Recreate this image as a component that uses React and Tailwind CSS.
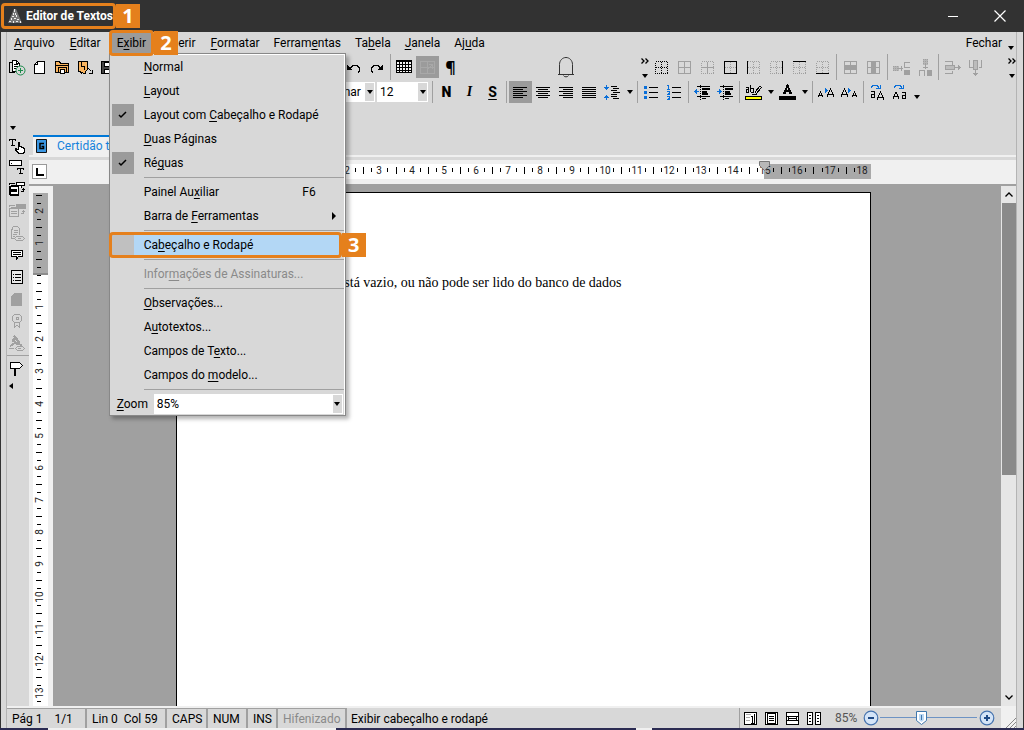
import { useState } from 'react'

const BLUE = '#0a6fd8'
const DIM = '#a0a0a0'

/* ---------- drawing helpers ---------- */

function Px({ w = 17, h = 17, children }) {
  return (
    <svg
      width={w}
      height={h}
      viewBox={`0 0 ${w} ${h}`}
      fill="none"
      stroke="#000"
      shapeRendering="crispEdges"
      className="block shrink-0"
      aria-hidden="true"
    >
      {children}
    </svg>
  )
}

const Caret = () => (
  <svg width="6" height="4" viewBox="0 0 6 4" className="block shrink-0" aria-hidden="true">
    <path d="M0 0h6L3 4z" fill="#000" />
  </svg>
)

const Chevrons = () => (
  <svg width="8" height="6" viewBox="0 0 8 6" fill="none" stroke="#000" strokeWidth="1.3" className="block shrink-0" aria-hidden="true">
    <path d="M.5.5 3 3 .5 5.500M4.500.5 7 3 4.500 5.500" />
  </svg>
)

/* ---------- toolbar icons ---------- */

const NewFromModel = () => (
  <svg width="18" height="17" viewBox="0 0 18 17" fill="none" stroke="#000" className="block shrink-0" aria-hidden="true">
    <g shapeRendering="crispEdges">
      <path d="M4.500 1.500h4l3 3v8h-7z" fill="#fff" />
      <path d="M6 5.500h4M6 7.500h4M6 9.500h2" />
      <path d="M4 3.500H1.500v10H7" />
      <path d="M8.500 1.500v3h3" />
    </g>
    <circle cx="12.500" cy="11.500" r="4.500" fill="#d8d8d8" stroke="#1a8a4a" />
    <path d="M10 11.500h5M12.500 9v5" stroke="#1a8a4a" />
  </svg>
)

const NewDoc = () => (
  <Px>
    <path d="M6.500 2.500h7v12h-10v-9z" fill="#fff" />
    <path d="M3.500 5.500h3v-3" />
  </Px>
)

const OpenFolder = () => (
  <Px>
    <path d="M1.500 13.500v-11h4l1 2h8v9z" fill="#f9b45f" />
    <path d="M1 6.500h14" />
    <path d="M4.500 14V8.500h8V14" />
    <path d="M6.500 14v-3.500h4V14z" fill="#fff" />
  </Px>
)

const ImportDoc = () => (
  <Px>
    <path d="M1.500 2.500h9v8l-2 2v2h-2l-1-1-1 1-1-2h-2z" fill="#f9b45f" />
    <path d="M4.500 3v4.500h3v3M10.500 8.500l4 4M15.500 11v3.500H12" />
  </Px>
)

const Save = () => (
  <Px>
    <path d="M1.500 2.500h13v12h-13z" fill="#444" />
    <path d="M4.500 3h7v4h-7zM4.500 10h7v4h-7z" fill="#fff" />
  </Px>
)

const Undo = () => (
  <Px>
    <path d="M4 9.500h1v-1h1v-1h1v-1h5v1h1v1h1v4h-1v1" />
    <path d="M2 6v5h5v-1H6V9H5V8H4V7H3V6z" fill="#000" stroke="none" />
  </Px>
)

const Redo = () => (
  <Px>
    <path d="M13 9.500h-1v-1h-1v-1h-1v-1H5v1H4v1H3v4h1v1" />
    <path d="M15 6v5h-5v-1h1V9h1V8h1V7h1V6z" fill="#000" stroke="none" />
  </Px>
)

const TableIcon = () => (
  <Px>
    <path d="M.5 1.500h15v12H.5z" fill="#f4f4f4" />
    <path d="M1 2.500h14M3.500 2v12M6.500 2v12M9.500 2v12M12.500 2v12M1 5.500h14M1 8.500h14M1 11.500h14" />
  </Px>
)

const TableTool = () => (
  <Px>
    <g stroke="#a8a8a8">
      <path d="M1.500 2.500h14v12h-14zM1.500 8.500h14M8.500 2.500v12M8 11l5-5M13.500 9.500v-4h-4" />
    </g>
  </Px>
)

const Bell = () => (
  <svg width="18" height="22" viewBox="0 0 18 22" fill="none" stroke="#333" className="block shrink-0" aria-hidden="true">
    <path d="M2.500 18V8.500C2.500 4.500 5.500 1.500 9 1.500s6.500 3 6.500 7V18M1 18.500h16" />
    <path d="M6.500 19.500c.5 1.800 4.500 1.800 5 0" />
  </svg>
)

const AlignIcon = ({ rows }) => (
  <Px>
    {rows.map(([from, to], i) => (
      <path key={i} d={`M${from} ${i * 2 + 3.5}H${to}`} />
    ))}
  </Px>
)

const alignLeft = [[1, 15], [1, 11], [1, 15], [1, 11], [1, 15], [1, 11]]
const alignCenter = [[1, 15], [3, 13], [1, 15], [3, 13], [1, 15], [3, 13]]
const alignRight = [[1, 15], [5, 15], [1, 15], [5, 15], [1, 15], [5, 15]]
const alignFull = [[1, 15], [1, 15], [1, 15], [1, 15], [1, 15], [1, 15]]

const LineSpacing = () => (
  <Px>
    <path d="M2.500 1v5M0 3.500h5M1 4.500h3M2.500 16v-5M0 13.500h5M1 12.500h3" stroke={BLUE} />
    <path d="M7 2.500h6M9 4.500h6M7 6.500h6M9 8.500h7M7 10.500h6M7 12.500h6M9 14.500h6" />
  </Px>
)

const Bullets = () => (
  <Px>
    <path d="M1 2h3v3H1zM1 7h3v3H1zM1 12h3v3H1z" fill={BLUE} stroke="none" />
    <path d="M6 3.500h9M6 8.500h9M6 13.500h9" />
  </Px>
)

const Numbers = () => (
  <Px>
    <path d="M1 1.500h1.500V5M1 5.500h3M1 7.500h2.500v1.500H2M1 10.500h3M1 12.500h2.500v3H1M2 14.500h1" stroke={BLUE} />
    <path d="M6 3.500h9M6 8.500h9M6 13.500h9" />
  </Px>
)

const Indent = ({ back }) => (
  <Px>
    <path d={back ? 'M0 7.500h5M1.500 6v3M2.500 5v5' : 'M0 7.500h5M3.500 6v3M2.500 5v5'} stroke={BLUE} />
    <path d="M3 2.500h13M3 12.500h13M8 14.500h4" />
    <path d="M8 5h8M8 7.500h5M8 9.500h6" strokeWidth="2" />
    <path d="M6.500 1v15" strokeDasharray="1 1" />
  </Px>
)

const Highlight = () => (
  <Px>
    <path d="M1 3.500h2.500V8H1.500V5.500H3M5.500 1v7M6 4.500h2.500V8H6" />
    <path d="M10 8l5-6 1.500 1.500-5 6zM7 10h5" />
    <path d="M.5 12.500h16v3H.5z" fill="#ff0" />
  </Px>
)

const FontColor = () => (
  <Px>
    <path d="M5 9.500 8.500 1.500 12 9.500M6 7h5" strokeWidth="2" />
    <path d="M4 9.500h3M10 9.500h3" />
    <path d="M.5 12.500h16v3H.5z" fill="#000" />
  </Px>
)

const FontStep = ({ grow }) => (
  <Px>
    <path d={grow ? 'M.5 13v-1L2.500 8l2 4v1M1 11.500h3M9.500 13v-2l3-6 3 6v2M10 10.500h6' : 'M.5 13v-2l3-6 3 6v2M1 10.500h5M11.500 13v-1l2-4 2 4v1M12 11.500h3'} />
    <path d="M7 4v5l3-2.500z" fill={BLUE} stroke="none" />
  </Px>
)

const SwapCase = ({ upper }) => (
  <Px>
    <path d="M2.500 4V2.500h1v-1h5v1h1v2M7 4.500h4.500V1" stroke={BLUE} />
    <path d={upper ? 'M1.500 15v-2l2.500-5 2.500 5v2M2 12.500h5M10 8.500h3.500V14H10v-2.500h3' : 'M2 7.500h3.500V13H2v-2.500h3M8.500 16v-2l3-6 3 6v2M9 13.500h6'} />
  </Px>
)

// sides: any of l, r, t, b drawn black over the dotted grid
const BorderIcon = ({ sides = '', tone = DIM, outer = 'dot', inner = 'dot' }) => (
  <Px>
    <path d="M2.500 2.500h12v12h-12z" stroke={tone} strokeDasharray={outer === 'dot' ? '1 1' : undefined} />
    <path d="M8.500 3v12M3 8.500h12" stroke={tone} strokeDasharray={inner === 'dot' ? '1 1' : undefined} />
    {sides.includes('l') && <path d="M2.500 2v13" />}
    {sides.includes('r') && <path d="M14.500 2v13" />}
    {sides.includes('t') && <path d="M2 2.500h13" />}
    {sides.includes('b') && <path d="M2 14.500h13" />}
  </Px>
)

const MergeRows = () => (
  <Px>
    <g stroke={DIM}>
      <path d="M2.500 2.500h12v12h-12zM8.500 2.500v12" />
      <path d="M2 6h13v5H2z" fill={DIM} stroke="none" />
    </g>
  </Px>
)

const MergeCols = () => (
  <Px>
    <g stroke={DIM}>
      <path d="M2.500 2.500h12v12h-12zM2.500 8.500h12" />
      <path d="M6 3h5v11H6z" fill={DIM} stroke="none" />
    </g>
  </Px>
)

const InsertCell = ({ vertical }) => (
  <Px>
    <g stroke={DIM} transform={vertical ? 'matrix(0 1 1 0 0 0)' : undefined}>
      <path d="M0 7h6v5H0z" fill={DIM} fillOpacity="0.6" stroke="none" />
      <path d="M0 7.500h6M0 9.500h6M0 11.500h6" strokeDasharray="1 1" />
      <path d="M11 11h6v5h-6z" fill={DIM} stroke="none" />
      <path d="M5 9.500h5M8.500 7v5M17 3.500h-5.500v5H17" />
    </g>
  </Px>
)

const SplitCell = ({ vertical }) => (
  <Px>
    <g stroke={DIM} transform={vertical ? 'matrix(0 1 1 0 0 0)' : undefined}>
      <path d="M1 6h10v5H1z" fill={DIM} fillOpacity="0.5" stroke="none" />
      <path d="M1 2.500h7.500v3M1 14.500h7.500v-3M1 6.500h9v4H1zM10 8.500h7M14.500 6v5M15.500 7v3" />
    </g>
  </Px>
)

/* ---------- side bar icons ---------- */

const sideIcons = [
  ['Texto rápido', (
    <>
      <path d="M0 2.500h7M3.500 2v7M2 8.500h4M.5 2v2M6.500 2v2" />
      <path d="M9.500 12V5.500h1V9h2v1h2v1h1v4h-1v1h-5v-1h-1v-1h-1v-1h-1v-2h1v1z" fill="#fff" />
    </>
  )],
  ['Campo', (
    <>
      <path d="M.5 1.500h12v5H.5z" fill="#fff" />
      <path d="M2 4.500h1M8 9.500h7M11.500 9v6M10 14.500h4M8.500 9v2M14.500 9v2" />
    </>
  )],
  ['Modelo', (
    <>
      <path d="M7.500 1.500h8v3h-8z" fill="#fff" />
      <path d="M.5 5.500h9v8h-9zM.5 4V2.500H6M2 4.500h10.500V7" fill="#fff" />
      <path d="M2 8.500h6M2 9.500h6M2 10.500h6M14.500 7v3.500H12M13 8.500h3" />
      <path d="M1 6v8h9" />
    </>
  )],
  ['Modelo inativo', (
    <g stroke={DIM}>
      <path d="M.5 5.500h9v8h-9zM2 4.500h9M2 8.500h6M2 10.500h6M14.500 7v3.500H12M13 8.500h3M.5 4V2.500H6" />
      <path d="M7 1.500h9v4H7z" fill={DIM} />
    </g>
  )],
  ['Visualizar', (
    <g stroke={DIM}>
      <path d="M3.500 1.500h5l2 2v6M3.500 1.500v3h-1v9h3M5 5.500h4M5 7.500h4M4 9.500h4M4 11.500h2" />
      <path d="M5.500 13.500l2-2h6l2 2-2 2h-6zM9 13.500h3" />
    </g>
  )],
  ['Comentário', (
    <>
      <path d="M2.500 3.500h11v6h-4l-2 3v-3h-5z" fill="#fff" />
      <path d="M4 5.500h8M4 7.500h8" />
    </>
  )],
  ['Lista', (
    <>
      <path d="M2.500 1.500h11v13h-11z" fill="#e8e8e8" />
      <path d="M4 5.500h1M6 5.500h6M4 8.500h1M6 8.500h6M4 11.500h1M6 11.500h6" />
    </>
  )],
  ['Documento', <path key="d" d="M5 2h8v13H2V5z" fill={DIM} stroke="none" />],
  ['Certificado', (
    <g stroke={DIM}>
      <path d="M5.500 1.500h5l2 2v4l-2 2h-5l-2-2v-4zM7.500 4.500h2v2h-2zM5.500 10v4l2.500-1.500 2.500 1.500v-4" />
    </g>
  )],
  ['Assinatura', (
    <g stroke={DIM}>
      <path d="M5 1l4 4M3 5l5 4M6 3l4 4-2 2-4-4zM9 8l4 3M1 11l5-3" strokeWidth="2" />
      <path d="M0 13.500h5M6.500 13.500l2-2h5l2 2-2 2h-5z" />
      <path d="M9 13.500h3" />
    </g>
  )],
]

/* ---------- small building blocks ---------- */

function Tool({ label, pressed, children }) {
  return (
    <button
      type="button"
      aria-label={label}
      className={
        pressed
          ? '-mx-0.5 flex h-[22px] w-[23px] shrink-0 items-center justify-center bg-[#9b9b9b]'
          : 'flex h-[22px] w-[19px] shrink-0 items-center justify-center'
      }
    >
      {children}
    </button>
  )
}

const DropArrow = ({ label }) => (
  <button type="button" aria-label={label} className="flex h-[22px] w-[7px] shrink-0 items-center justify-center">
    <Caret />
  </button>
)

const Sep = () => <div className="w-px shrink-0 self-stretch bg-[#a0a0a0]" />

// one letter of the label is the keyboard mnemonic
function Label({ text, at }) {
  if (at === undefined) return text
  return (
    <>
      {text.slice(0, at)}
      <span className="underline underline-offset-2">{text[at]}</span>
      {text.slice(at + 1)}
    </>
  )
}

function Combo({ label, options, box, pad }) {
  return (
    <div className={`relative flex h-5 border border-white bg-white ${box}`}>
      <select aria-label={label} className={`w-full appearance-none bg-white pr-3 text-xs leading-4 outline-none ${pad}`}>
        {options.map(o => <option key={o}>{o}</option>)}
      </select>
      <span className="pointer-events-none absolute inset-y-0 right-0 flex w-[9px] items-center justify-center bg-[#d8d8d8]">
        <Caret />
      </span>
    </div>
  )
}

const Badge = ({ n }) => (
  <span className="flex h-6 w-6 shrink-0 items-center justify-center bg-[#e5801c] font-['Open_Sans',sans-serif] text-xl leading-6 font-bold text-white">
    {n}
  </span>
)

/* ---------- rulers ---------- */

const CM = 32.15

function marks(zero, end) {
  const list = []
  for (let q = Math.ceil((-zero / CM) * 4); zero + (q * CM) / 4 < end - 2; q++) {
    list.push({ q, pos: Math.round(zero + (q * CM) / 4) })
  }
  return list
}

function HorizontalRuler() {
  return (
    <svg width="694" height="19" viewBox="0 0 694 19" className="block" aria-hidden="true">
      <rect x="0" y="4" width="694" height="15" fill="#a9a9a9" />
      <rect x="106" y="4" width="481" height="15" fill="#fff" />
      <g shapeRendering="crispEdges">
        {marks(106, 694).map(({ q, pos }) => {
          if (q % 4 === 0) return null
          return q % 2 === 0
            ? <path key={q} d={`M${pos}.5 7v7`} stroke="#000" />
            : <path key={q} d={`M${pos}.5 8v4`} stroke="#000" />
        })}
      </g>
      {marks(106, 694).map(({ q, pos }) =>
        q % 4 === 0 && q !== 0 ? (
          <text key={q} x={pos} y="14" textAnchor="middle" fontSize="10" fill="#222">{Math.abs(q / 4)}</text>
        ) : null
      )}
      <path d="M582.500 1.500h10v4l-5 5-5-5z" fill="#b8b8b8" stroke="#777" />
    </svg>
  )
}

function VerticalRuler() {
  return (
    <svg width="15" height="513" viewBox="0 0 15 513" className="block" aria-hidden="true">
      <rect width="15" height="82" fill="#a9a9a9" />
      <rect y="80" width="15" height="2" fill="#8c8c8c" />
      <g shapeRendering="crispEdges">
        {marks(82, 513).map(({ q, pos }) => {
          if (q % 4 === 0 && q !== 0) return null
          return q % 2 === 0 && q !== 0
            ? <path key={q} d={`M3 ${pos}.5h6`} stroke="#000" />
            : <path key={q} d={`M4 ${pos}.5h4`} stroke="#000" />
        })}
      </g>
      {marks(82, 513).map(({ q, pos }) =>
        q % 4 === 0 && q !== 0 ? (
          <text key={q} transform={`translate(10 ${pos}) rotate(-90)`} textAnchor="middle" fontSize="10" fill="#222">
            {Math.abs(q / 4)}
          </text>
        ) : null
      )}
    </svg>
  )
}

/* ---------- window parts ---------- */

function TitleBar() {
  return (
    <header className="flex h-8 shrink-0 items-center bg-[#323232] text-white">
      <div className="flex items-center pl-px">
        <div className="flex h-[26px] items-center gap-1 rounded-sm border-3 border-[#e5801c] pl-1">
          <svg width="14" height="14" viewBox="0 0 14 14" aria-hidden="true">
            <path d="M6 0h2l6 14H0z" fill="#777" />
            <path d="M6 0h1v3H6zM5 4h1v2H5zM7 4h1v2H7zM4 7h2v1H4zM8 6h1v2H8zM3 9h1v2H3zM6 9h2v1H6zM9 10h2v1H9zM1 12h2v1H1zM5 12h1v2H5zM8 12h2v1H8zM12 12h1v2h-1z" fill="#eee" />
          </svg>
          <h1 className="text-xs font-bold whitespace-nowrap">Editor de Textos</h1>
        </div>
        <Badge n="1" />
      </div>
      <div className="ml-auto flex">
        <button type="button" aria-label="Minimizar" className="flex h-8 w-[46px] items-center justify-center">
          <span className="h-px w-[10px] bg-white" />
        </button>
        <button type="button" aria-label="Fechar janela" className="flex h-8 w-12 items-center justify-center">
          <svg width="12" height="12" viewBox="0 0 12 12" stroke="#fff" strokeWidth="1.2" aria-hidden="true">
            <path d="M.5.5l11 11M11.500.5l-11 11" />
          </svg>
        </button>
      </div>
    </header>
  )
}

const menuBefore = [['Arquivo', 0], ['Editar', 0]]
const menuAfter = [['Formatar', 0], ['Ferramentas', 6], ['Tabela', 2], ['Janela', 0], ['Ajuda', 2]]

const viewMenu = [
  { text: 'Normal', at: 0 },
  { text: 'Layout', at: 0 },
  { text: 'Layout com Cabeçalho e Rodapé', at: 11, checked: true },
  { text: 'Duas Páginas', at: 0 },
  { text: 'Réguas', at: 2, checked: true },
  null,
  { text: 'Painel Auxiliar', at: 9, keys: 'F6' },
  { text: 'Barra de Ferramentas', at: 9, submenu: true },
  null,
  { text: 'Cabeçalho e Rodapé', at: 2, active: true },
  null,
  { text: 'Informações de Assinaturas...', at: 5, disabled: true },
  null,
  { text: 'Observações...', at: 0 },
  { text: 'Autotextos...', at: 1 },
  { text: 'Campos de Texto...', at: 11 },
  { text: 'Campos do modelo...', at: 10 },
  null,
]

function ViewMenu() {
  return (
    <div className="absolute top-[21px] left-0 -z-10 w-[237px] border border-[#888] bg-[#d8d8d8] shadow-[3px_3px_4px_rgba(0,0,0,0.3)]">
      <div className="border-t border-r border-white">
        {viewMenu.map((item, i) => {
          if (!item) {
            return (
              <div key={i} className="flex h-[5px] items-center pl-[34px]">
                <div className="h-px flex-1 bg-[#a0a0a0]" />
              </div>
            )
          }
          return (
            <div key={i} className="relative h-6">
              <button
                type="button"
                disabled={item.disabled}
                className={`flex h-6 w-full items-center text-left whitespace-nowrap ${item.disabled ? 'text-[#8a8a8a]' : 'text-black'}`}
              >
                <span
                  className={`ml-0.5 flex h-[22px] w-[22px] shrink-0 items-center justify-center ${item.checked ? 'bg-[#9b9b9b]' : ''} ${item.active ? 'bg-[#c0c0c0]' : ''}`}
                >
                  {item.checked && (
                    <svg width="9" height="8" viewBox="0 0 9 8" fill="none" stroke="#000" strokeWidth="1.5" aria-hidden="true">
                      <path d="M1 4l2 2 5-5" />
                    </svg>
                  )}
                </span>
                <span className={`flex h-[22px] flex-1 items-center pl-[10px] ${item.active ? 'bg-[#b3d7f5]' : ''}`}>
                  <span><Label text={item.text} at={item.at} /></span>
                  {item.keys && <span className="mr-7 ml-auto">{item.keys}</span>}
                  {item.submenu && (
                    <svg width="4" height="8" viewBox="0 0 4 8" className="mr-2 ml-auto" aria-hidden="true">
                      <path d="M0 0v8l4-4z" fill="#000" />
                    </svg>
                  )}
                </span>
              </button>
              {item.active && (
                <div className="pointer-events-none absolute -inset-y-px -right-[22px] -left-px flex items-center">
                  <div className="h-full flex-1 rounded-sm border-3 border-[#e5801c]" />
                  <Badge n="3" />
                </div>
              )}
            </div>
          )
        })}
        <div className="flex h-[23px] items-center gap-1 pr-px pl-[7px]">
          <span className="w-[33px] shrink-0"><Label text="Zoom" at={0} /></span>
          <Combo label="Zoom" options={['85%', '100%', '150%']} box="flex-1" pad="pl-0.5" />
        </div>
      </div>
    </div>
  )
}

function MenuBar() {
  return (
    <nav className="flex h-[22px] shrink-0 items-center">
      {menuBefore.map(([text, at]) => (
        <button key={text} type="button" className="pr-2 pl-[7px]"><Label text={text} at={at} /></button>
      ))}
      <div className="relative z-20 flex h-[22px] items-center">
        <button type="button" className="flex h-[26px] items-center rounded-sm border-3 border-[#e5801c] bg-[#9b9b9b] px-[5px]">
          <Label text="Exibir" at={1} />
        </button>
        <Badge n="2" />
        <ViewMenu />
      </div>
      <button type="button" className="-ml-4 pr-2"><Label text="Inserir" at={0} /></button>
      {menuAfter.map(([text, at]) => (
        <button key={text} type="button" className="px-[7px]"><Label text={text} at={at} /></button>
      ))}
      <button type="button" className="ml-auto pr-1.5">Fechar</button>
      <span className="flex w-2 self-end pb-1"><Caret /></span>
    </nav>
  )
}

function Toolbars() {
  return (
    <div className="flex h-[68px] shrink-0 flex-col overflow-hidden">
      <div className="flex h-[26px] items-center gap-1">
        <Tool label="Novo a partir de modelo"><NewFromModel /></Tool>
        <Tool label="Novo"><NewDoc /></Tool>
        <Tool label="Abrir"><OpenFolder /></Tool>
        <Tool label="Importar"><ImportDoc /></Tool>
        <Tool label="Salvar"><Save /></Tool>
        <div className="w-[218px] shrink-0" />
        <Tool label="Desfazer"><Undo /></Tool>
        <Tool label="Refazer"><Redo /></Tool>
        <Sep />
        <Tool label="Inserir tabela"><TableIcon /></Tool>
        <Tool label="Ferramenta de tabela" pressed><TableTool /></Tool>
        <Tool label="Marcas de parágrafo"><span className="font-['Open_Sans',sans-serif] text-base leading-4 font-bold">¶</span></Tool>
        <div className="w-[88px] shrink-0" />
        <Tool label="Notificações"><Bell /></Tool>
        <div className="w-[58px] shrink-0" />
        <div className="flex w-[7px] shrink-0 flex-col items-center justify-between self-stretch pt-1 pb-0.5">
          <Chevrons />
          <Caret />
        </div>
        <Tool label="Sem bordas"><BorderIcon tone="#000" /></Tool>
        <Tool label="Todas as bordas"><BorderIcon outer="line" inner="line" /></Tool>
        <Tool label="Bordas internas"><BorderIcon inner="line" /></Tool>
        <Tool label="Contorno"><BorderIcon sides="lrtb" /></Tool>
        <Tool label="Borda esquerda"><BorderIcon sides="l" /></Tool>
        <Tool label="Borda direita"><BorderIcon sides="r" /></Tool>
        <Tool label="Borda superior"><BorderIcon sides="t" /></Tool>
        <Tool label="Borda inferior"><BorderIcon sides="b" /></Tool>
        <Sep />
        <Tool label="Mesclar linhas"><MergeRows /></Tool>
        <Tool label="Mesclar colunas"><MergeCols /></Tool>
        <Sep />
        <Tool label="Inserir linha"><InsertCell /></Tool>
        <Tool label="Inserir coluna"><InsertCell vertical /></Tool>
        <Sep />
        <Tool label="Excluir linha"><SplitCell /></Tool>
        <Tool label="Excluir coluna"><SplitCell vertical /></Tool>
        <div className="ml-auto flex w-2 shrink-0 flex-col items-center justify-between self-stretch pt-1 pb-0.5">
          <Chevrons />
          <Caret />
        </div>
      </div>

      <div className="flex h-6 items-center gap-1 py-px">
        <div className="flex gap-0.5 pl-[238px]">
          <Combo label="Estilo" options={['Texto Preliminar']} box="w-[130px]" pad="pl-7" />
          <Combo label="Tamanho da fonte" options={['12', '14', '16']} box="w-[51px]" pad="pl-0.5" />
        </div>
        <Sep />
        <Tool label="Negrito"><span className="text-sm leading-5 font-black">N</span></Tool>
        <Tool label="Itálico"><span className="font-['Liberation_Serif',serif] text-sm leading-5 font-bold italic">I</span></Tool>
        <Tool label="Sublinhado"><span className="text-sm leading-5 font-bold underline underline-offset-2">S</span></Tool>
        <Sep />
        <Tool label="Alinhar à esquerda" pressed><AlignIcon rows={alignLeft} /></Tool>
        <Tool label="Centralizar"><AlignIcon rows={alignCenter} /></Tool>
        <Tool label="Alinhar à direita"><AlignIcon rows={alignRight} /></Tool>
        <Tool label="Justificar"><AlignIcon rows={alignFull} /></Tool>
        <Tool label="Espaçamento"><LineSpacing /></Tool>
        <DropArrow label="Opções de espaçamento" />
        <Sep />
        <Tool label="Marcadores"><Bullets /></Tool>
        <Tool label="Numeração"><Numbers /></Tool>
        <Sep />
        <Tool label="Diminuir recuo"><Indent back /></Tool>
        <Tool label="Aumentar recuo"><Indent /></Tool>
        <Sep />
        <Tool label="Realce"><Highlight /></Tool>
        <DropArrow label="Cor do realce" />
        <Tool label="Cor da fonte"><FontColor /></Tool>
        <DropArrow label="Escolher cor da fonte" />
        <Sep />
        <Tool label="Aumentar fonte"><FontStep grow /></Tool>
        <Tool label="Diminuir fonte"><FontStep /></Tool>
        <Sep />
        <Tool label="Maiúsculas"><SwapCase /></Tool>
        <Tool label="Minúsculas"><SwapCase upper /></Tool>
        <span className="flex self-end pb-1"><Caret /></span>
      </div>
    </div>
  )
}

function SideBar() {
  return (
    <aside className="flex w-[22px] shrink-0 flex-col overflow-hidden">
      <div className="flex h-3 shrink-0 items-center pl-[3px]"><Caret /></div>
      {sideIcons.map(([label, art]) => (
        <button key={label} type="button" aria-label={label} className="flex h-[22px] shrink-0 items-center pl-0.5">
          <Px>{art}</Px>
        </button>
      ))}
      <div className="my-px h-px shrink-0 bg-[#a0a0a0]" />
      <button type="button" aria-label="Marcador" className="flex h-[22px] shrink-0 items-center pl-0.5">
        <Px>
          <path d="M1.500 2.500h9l3 3-3 3h-9z" fill="#fff" />
          <path d="M6 9v7" strokeWidth="2" />
        </Px>
      </button>
      <svg width="4" height="6" viewBox="0 0 4 6" className="mt-1 ml-0.5 shrink-0" aria-hidden="true">
        <path d="M4 0v6L0 3z" fill="#000" />
      </svg>
    </aside>
  )
}

function ScrollBar() {
  return (
    <div className="mt-0.5 flex w-[15px] shrink-0 flex-col bg-[#e6e6e6]">
      <button type="button" aria-label="Rolar para cima" className="flex h-[17px] shrink-0 items-center justify-center">
        <svg width="8" height="5" viewBox="0 0 8 5" fill="none" stroke="#000" strokeWidth="1.3" aria-hidden="true">
          <path d="M.5 4.500 4 1l3.500 3.500" />
        </svg>
      </button>
      <div className="flex min-h-0 flex-1 flex-col pl-px">
        <div className="h-[56%] bg-[#8a8a8a]" />
      </div>
      <button type="button" aria-label="Rolar para baixo" className="flex h-[17px] shrink-0 items-center justify-center">
        <svg width="8" height="5" viewBox="0 0 8 5" fill="none" stroke="#000" strokeWidth="1.3" aria-hidden="true">
          <path d="M.5.5 4 4 7.500.5" />
        </svg>
      </button>
    </div>
  )
}

function Workspace() {
  return (
    <div className="flex min-w-0 flex-1 flex-col">
      {/* document tabs */}
      <div className="flex h-[35px] shrink-0 items-end border-b-2 border-[#f0f0f0] pl-1">
        <a href="#certidao" className="flex h-5 w-[160px] items-center gap-[10px] border-t-2 border-[#0078d7] bg-[#f0f0f0] pl-[3px] text-[#1583dc]">
          <svg width="11" height="14" viewBox="0 0 11 14" aria-hidden="true">
            <path d="M.5.5h10v13H.5z" fill="#3b97e3" stroke="#111" />
            <path d="M8 4.500H4v5h3.500V7.500H5.500" fill="none" stroke="#000" strokeWidth="1.500" />
          </svg>
          Certidão teste
        </a>
      </div>

      {/* horizontal ruler */}
      <div className="mt-[3px] flex h-6 shrink-0 bg-[#f0f0f0] pl-[3px]">
        <button type="button" aria-label="Tabulação" className="mt-1 flex h-[15px] w-[15px] items-center justify-center border border-[#999] bg-white">
          <span className="h-2 w-2 border-b-2 border-l-2 border-black" />
        </button>
        <div className="ml-[130px]"><HorizontalRuler /></div>
      </div>

      <div className="flex min-h-0 flex-1 bg-[#a0a0a0]">
        <div className="mt-0.5 flex w-6 shrink-0 flex-col overflow-hidden bg-[#f0f0f0] pt-[7px] pr-[5px] pl-1">
          <div className="flex-1 bg-white"><VerticalRuler /></div>
        </div>
        <main className="flex min-w-0 flex-1 overflow-hidden pt-2 pl-[123px]">
          <article className="w-[695px] shrink-0 border border-b-0 border-black bg-white pt-[80px] pl-[102px] font-['Liberation_Serif',serif] text-sm leading-5">
            O modelo está vazio, ou não pode ser lido do banco de dados
          </article>
        </main>
        <ScrollBar />
      </div>
    </div>
  )
}

const StatusCell = ({ children, size, dim }) => (
  <div className={`flex items-center border-t border-r-2 border-[#a0a0a0] pl-[5px] whitespace-pre ${size} ${dim ? 'text-[#8a8a8a]' : ''}`}>
    {children}
  </div>
)

function StatusBar() {
  const [zoom, setZoom] = useState(85)
  const thumb = Math.round((zoom / 200) * 98)

  return (
    <footer className="flex h-[22px] shrink-0 border-t-2 border-[#f0f0f0]">
      <StatusCell size="w-[80px]">Pág 1    1/1</StatusCell>
      <StatusCell size="w-[80px]">Lin 0  Col 59</StatusCell>
      <StatusCell size="w-[41px]">CAPS</StatusCell>
      <StatusCell size="w-[40px]">NUM</StatusCell>
      <StatusCell size="w-[30px]">INS</StatusCell>
      <StatusCell size="w-[69px]" dim>Hifenizado</StatusCell>
      <div className="flex items-center border-t border-transparent pl-1">Exibir cabeçalho e rodapé</div>

      <div className="ml-auto flex items-center gap-2 border-l border-[#a0a0a0] pl-1">
        <button type="button" aria-label="Normal">
          <Px w={13} h={13}>
            <path d="M.5.5h12v12H.5z" fill="#fff" />
            <path d="M2 2.500h5M2 5.500h4M2 8.500h4" stroke="#aaa" />
            <path d="M7 4.500h1.500V11M7 11.500h4M10.500 2v9" />
          </Px>
        </button>
        <button type="button" aria-label="Layout">
          <Px w={13} h={13}>
            <path d="M.5.5h12v12H.5z" fill="#fff" />
            <path d="M2.500 1.500h8v10h-8z" />
            <path d="M4 4.500h5M4 6.500h5M4 8.500h5" />
          </Px>
        </button>
        <button type="button" aria-label="Cabeçalho e rodapé">
          <Px w={13} h={13}>
            <path d="M.5.500h12v12H.5z" fill="#fff" />
            <path d="M0 4.500h13M0 8.500h13M3 6.500h7M2.500 5v3M10.500 5v3" />
          </Px>
        </button>
        <button type="button" aria-label="Duas páginas">
          <Px w={14} h={13}>
            <path d="M.5.500h5v12H.5zM8.500.500h5v12h-5z" fill="#fff" />
            <path d="M2 3.500h2M2 6.500h2M2 9.500h2M10 3.500h2M10 6.500h2M10 9.500h2" />
          </Px>
        </button>
        <output htmlFor="zoom" className="ml-1.5 w-6 text-[#555]">{zoom}%</output>
      </div>
      <div className="flex items-center gap-px pr-1.5 pl-1">
        <button type="button" aria-label="Diminuir zoom" onClick={() => setZoom(z => Math.max(5, z - 5))}>
          <svg width="16" height="16" viewBox="0 0 16 16" className="block" aria-hidden="true">
            <circle cx="8" cy="8" r="6.800" fill="#d4e4f7" stroke="#4472ae" strokeWidth="1.200" />
            <path d="M5 8h6" stroke="#1f4a86" strokeWidth="2" />
          </svg>
        </button>
        <div className="relative h-4 w-[98px]">
          <svg width="98" height="16" viewBox="0 0 98 16" className="block" aria-hidden="true">
            <path d="M0 7.500h97" stroke="#6d93c4" />
            <g transform={`translate(${thumb - 6} 1)`}>
              <path d="M.5.5h10v9l-5 4-5-4z" fill="#fff" stroke="#3f78ad" />
              <path d="M3 3h5v6l-2.500 2L3 9z" fill="#b9d8f5" />
              <path d="M5.500 4v5" stroke="#3f78ad" />
            </g>
          </svg>
          <input
            id="zoom"
            type="range"
            aria-label="Nível de zoom"
            min="0"
            max="200"
            value={zoom}
            onChange={e => setZoom(Number(e.target.value))}
            className="absolute inset-0 w-full opacity-0"
          />
        </div>
        <button type="button" aria-label="Aumentar zoom" onClick={() => setZoom(z => Math.min(200, z + 5))}>
          <svg width="16" height="16" viewBox="0 0 16 16" className="block" aria-hidden="true">
            <circle cx="8" cy="8" r="6.800" fill="#d4e4f7" stroke="#4472ae" strokeWidth="1.200" />
            <path d="M5 8h6M8 5v6" stroke="#1f4a86" strokeWidth="2" />
          </svg>
        </button>
      </div>
      <div className="flex w-[15px] items-end justify-end bg-[#f0f0f0]">
        <svg width="10" height="10" viewBox="0 0 10 10" stroke="#888" aria-hidden="true">
          <path d="M0 10 10 0M4 10l6-6M8 10l2-2" />
        </svg>
      </div>
    </footer>
  )
}

export default function App() {
  return (
    <div className="flex h-screen flex-col overflow-hidden bg-[#d8d8d8] font-['Roboto',sans-serif] text-xs leading-4 text-black">
      <TitleBar />
      <div className="flex min-h-0 flex-1 border-x border-[#323232] pr-1.5 pl-[5px]">
        <div className="flex min-w-0 flex-1 flex-col border-x border-[#b4b4b4]">
          <MenuBar />
          <Toolbars />
          <div className="flex min-h-0 flex-1">
            <SideBar />
            <Workspace />
          </div>
          <StatusBar />
        </div>
      </div>
      {/* desktop showing under the window */}
      <div className="flex h-0.5 shrink-0 bg-[#2b2b52]">
        <div className="ml-12 w-72 bg-[#f0f0f0]" />
        <div className="ml-[300px] w-4 bg-[#f0f0f0]" />
      </div>
    </div>
  )
}
